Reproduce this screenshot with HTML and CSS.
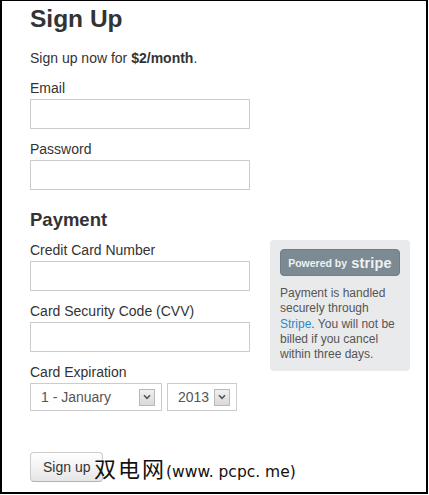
FILE: index.html
```html
<!DOCTYPE html>
<html lang="en">
<head>
<meta charset="utf-8">
<title>Sign Up</title>
<link rel="stylesheet" href="styles.css">
</head>
<body>
<div class="frame">
  <h1 class="title">Sign Up</h1>
  <p class="lead">Sign up now for <strong>$2/month</strong>.</p>
  <form class="form">
    <label class="label">Email</label>
    <input class="input" type="text">
    <label class="label">Password</label>
    <input class="input" type="password">
    <h2 class="section">Payment</h2>
    <div class="payment">
      <div class="fields">
        <label class="label">Credit Card Number</label>
        <input class="input" type="text">
        <label class="label">Card Security Code (CVV)</label>
        <input class="input" type="text">
        <label class="label">Card Expiration</label>
        <div class="expiry">
          <div class="select select-month">
            <select class="select-field"><option>1 - January</option></select>
            <span class="arrow"><svg width="8" height="6" viewBox="0 0 8 6"><path d="M1 1.2 L4 4.4 L7 1.2" fill="none" stroke="#555" stroke-width="1.6"/></svg></span>
          </div>
          <div class="select select-year">
            <select class="select-field"><option>2013</option></select>
            <span class="arrow"><svg width="8" height="6" viewBox="0 0 8 6"><path d="M1 1.2 L4 4.4 L7 1.2" fill="none" stroke="#555" stroke-width="1.6"/></svg></span>
          </div>
        </div>
      </div>
      <aside class="stripe-box">
        <div class="badge">Powered by <span class="stripe-word">stripe</span></div>
        <p class="stripe-text">Payment is handled securely through <a class="stripe-link" href="#">Stripe</a>. You will not be billed if you cancel within three days.</p>
      </aside>
    </div>
    <div class="actions"><button class="btn" type="button">Sign up</button></div>
  </form>
  <div class="watermark"><span class="wm-cjk">双电网</span><span class="wm-latin">(www. pcpc. me)</span></div>
</div>
</body>
</html>
```

FILE: styles.css
```css
html, body {
  margin: 0;
  padding: 0;
  background: #fff;
}
body {
  width: 429px;
  height: 495px;
  font-family: "Liberation Sans", Arial, sans-serif;
  font-size: 14px;
  line-height: 20px;
  color: #333;
}
.frame {
  position: relative;
  box-sizing: border-box;
  width: 428px;
  height: 494px;
  border-top: 1px solid #000;
  border-left: 2px solid #000;
  border-right: 2px solid #000;
  border-bottom: 2px solid #000;
  padding-left: 28px;
  overflow: hidden;
}
.title {
  margin: 3px 0 14px;
  font-size: 24.5px;
  line-height: 30px;
  font-weight: bold;
  color: #333;
}
.lead {
  margin: 0 0 10px;
}
.form {
  margin: 0;
}
.label {
  display: block;
  margin-bottom: 1px;
}
.input {
  display: block;
  box-sizing: border-box;
  width: 220px;
  height: 30px;
  margin: 0 0 10px;
  padding: 4px 6px;
  border: 1px solid #ccc;
  border-radius: 0;
  background: #fff;
  font: inherit;
}
.section {
  margin: 20px 0 10px;
  font-size: 18.5px;
  line-height: 20px;
  font-weight: bold;
  color: #333;
}
.payment {
  display: grid;
  grid-template-columns: 220px 140px;
  column-gap: 20px;
  align-items: start;
}
.expiry {
  display: flex;
  gap: 5px;
}
.select {
  display: flex;
  align-items: center;
  box-sizing: border-box;
  height: 28px;
  border: 1px solid #ccc;
  background: #fff;
}
.select-month { width: 132px; }
.select-year { width: 70px; }
.select-field {
  flex: 1;
  min-width: 0;
  appearance: none;
  -webkit-appearance: none;
  border: 0;
  background: transparent;
  padding: 0 0 0 10px;
  font: inherit;
  color: #555;
  outline: none;
}
.arrow {
  display: flex;
  align-items: center;
  justify-content: center;
  box-sizing: border-box;
  width: 16px;
  height: 17px;
  margin-right: 6px;
  border: 1px solid #b9b9b9;
  background: linear-gradient(#f0f0f0, #d9d9d9);
}
.stripe-box {
  box-sizing: border-box;
  width: 140px;
  padding: 9px 10px 9px;
  background: #e9eaeb;
  border-radius: 4px;
}
.badge {
  height: 27px;
  display: flex;
  align-items: center;
  justify-content: center;
  gap: 4px;
  background: #7c8a93;
  border: 1px solid #6f7d86;
  box-sizing: border-box;
  border-radius: 4px;
  color: #eef2f4;
  font-size: 10.5px;
  font-weight: bold;
}
.stripe-word {
  font-size: 14.5px;
  font-weight: bold;
  letter-spacing: 0.2px;
}
.stripe-text {
  margin: 10px 0 0;
  font-size: 12px;
  line-height: 15.3px;
  color: #555;
}
.stripe-link {
  color: #2f8ac6;
  text-decoration: none;
}
.actions {
  margin-top: 41px;
}
.btn {
  box-sizing: border-box;
  height: 30px;
  padding: 4px 12px;
  border: 1px solid #ccc;
  border-bottom-color: #b3b3b3;
  border-radius: 4px;
  background: linear-gradient(#ffffff, #e6e6e6);
  font: inherit;
  color: #333;
}
.watermark {
  position: absolute;
  left: 92px;
  top: 452px;
  display: flex;
  align-items: baseline;
  line-height: 28px;
  color: #111;
  white-space: nowrap;
}
.wm-cjk {
  font-family: "Noto Sans CJK SC", sans-serif;
  font-size: 22px;
  letter-spacing: 2px;
}
.wm-latin {
  font-family: "DejaVu Sans", sans-serif;
  font-size: 15.5px;
}
```
